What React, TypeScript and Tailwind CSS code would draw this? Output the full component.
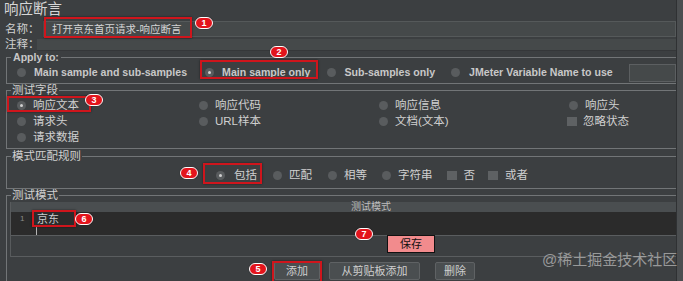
import React from "react";

const Radio = ({ checked }: { checked?: boolean }) => (
  <span className="w-[9px] h-[9px] rounded-full bg-[#595c5e] shrink-0 flex items-center justify-center">
    {checked && <span className="w-[3px] h-[3px] rounded-full bg-[#cfcfcf]" />}
  </span>
);

const Check = () => <span className="w-[10px] h-[9px] bg-[#5e6163] shrink-0" />;

const Opt = ({
  label,
  checked,
  box,
  className = "",
  gap = "ml-[7px]",
}: {
  label: string;
  checked?: boolean;
  box?: boolean;
  className?: string;
  gap?: string;
}) => (
  <div className={"flex items-center " + className}>
    {box ? <Check /> : <Radio checked={checked} />}
    <span className={gap + " whitespace-nowrap"}>{label}</span>
  </div>
);

const Badge = ({ n, x, y }: { n: number; x: number; y: number }) => (
  <div
    className="absolute w-[18px] h-[12px] rounded-full bg-[#e3141c] border-[1.5px] border-white flex items-center justify-center text-white font-bold text-[9px] leading-[9px] shadow-[0_0_1px_rgba(0,0,0,0.6)]"
    style={{ left: x, top: y }}
  >
    {n}
  </div>
);

const RedBox = ({ x, y, w, h }: { x: number; y: number; w: number; h: number }) => (
  <div
    className="absolute border-2 border-[#cf151c] shadow-[0_0_2px_rgba(0,0,0,0.5)]"
    style={{ left: x, top: y, width: w, height: h }}
  />
);

export default function App() {
  return (
    <div className="relative w-[683px] h-[281px] overflow-hidden bg-[#3c3f41] flex font-['Liberation_Sans','Noto_Sans_CJK_SC',sans-serif] text-[#d0d0d0]">
      <div className="w-[676px] flex flex-col">
        {/* title */}
        <div className="h-[19px] pl-[4px] text-[14.5px] leading-[19px] text-[#d6d6d6]">响应断言</div>

        {/* name */}
        <div className="h-[19px] flex items-center">
          <span className="w-[43px] pl-[5px] text-[11.5px] leading-[14px] whitespace-nowrap">名称：</span>
          <div className="flex-1 h-[16px] bg-[#45494a] border border-[#55595a] flex items-center pl-[8px] text-[10.5px] leading-[12px] text-[#d4d4d4]">
            打开京东首页请求-响应断言
          </div>
        </div>

        {/* comment */}
        <div className="h-[13px] flex items-center">
          <span className="w-[37px] pl-[5px] text-[11.5px] leading-[13px] whitespace-nowrap">注释：</span>
          <div className="flex-1 h-[12px] bg-[#45494a] border-b border-[#353739]" />
        </div>

        {/* Apply to */}
        <fieldset className="ml-[6px] border-t border-l border-b border-[#727577]">
          <legend className="ml-[4px] px-[2px] text-[10.6px] leading-[12px] font-bold text-[#c8c8c8]">
            Apply to:
          </legend>
          <div className="h-[20px] flex items-center pl-[10px] font-bold text-[10.6px] text-[#c8c8c8]">
            <Opt label="Main sample and sub-samples" gap="ml-[8px]" />
            <Opt label="Main sample only" checked className="ml-[18px]" gap="ml-[8px]" />
            <Opt label="Sub-samples only" className="ml-[17px]" gap="ml-[8px]" />
            <Opt label="JMeter Variable Name to use" className="ml-[16px]" gap="ml-[9px]" />
            <div className="ml-auto w-[47px] h-[18px] bg-[#45494a] border border-[#5c5f61]" />
          </div>
        </fieldset>

        {/* 测试字段 */}
        <fieldset className="ml-[6px] border-t border-l border-b border-[#727577]">
          <legend className="ml-[4px] px-[1px] text-[11.5px] leading-[12px]">测试字段</legend>
          <div className="grid grid-cols-[182px_180px_190px_1fr] auto-rows-[16px] pl-[10px] pt-[1px] pb-[3px] text-[11.5px] leading-[14px]">
            <Opt label="响应文本" checked />
            <Opt label="响应代码" />
            <Opt label="响应信息" />
            <Opt label="响应头" />
            <Opt label="请求头" />
            <Opt label="URL样本" />
            <Opt label="文档(文本)" />
            <Opt label="忽略状态" box className="-ml-[2px]" gap="ml-[6px]" />
            <Opt label="请求数据" />
          </div>
        </fieldset>

        {/* 模式匹配规则 */}
        <fieldset className="mt-[1px] ml-[6px] border-t border-l border-b border-[#727577]">
          <legend className="ml-[4px] px-[1px] text-[11.5px] leading-[12px]">模式匹配规则</legend>
          <div className="h-[26px] flex items-center pl-[209px] text-[11.5px] leading-[14px]">
            <Opt label="包括" checked gap="ml-[9px]" />
            <Opt label="匹配" className="ml-[16px]" />
            <Opt label="相等" className="ml-[16px]" />
            <Opt label="字符串" className="ml-[15px]" />
            <Opt label="否" box className="ml-[14px]" />
            <Opt label="或者" box className="ml-[13px]" />
          </div>
        </fieldset>

        {/* 测试模式 */}
        <fieldset className="ml-[6px] border-t border-l border-[#727577] flex-1">
          <legend className="ml-[4px] px-[1px] text-[11.5px] leading-[12px]">测试模式</legend>
          <div className="ml-[3px] mt-[1px] border-l border-[#585b5d] flex flex-col">
            <div className="h-[10px] bg-[#4a4e50] pl-[340px] text-[10px] leading-[10px] text-[#bdbdbd]">
              测试模式
            </div>
            <div className="h-[23px] bg-[#2b2b2b] flex items-start pt-[1px]">
              <span className="w-[26px] pl-[9px] text-[8px] leading-[12px] text-[#8a8a8a]">1</span>
              <div className="flex flex-col">
                <span className="text-[11px] leading-[12px] text-[#cccccc]">京东</span>
                <span className="-ml-[1px] w-px h-[10px] bg-[#b5b5b5]" />
              </div>
            </div>
            <div className="h-[22px] border-t border-b border-[#5a5d5f] flex items-start">
              <div className="-mt-[1px] ml-[376px] w-[48px] h-[18px] bg-[#f28b8d] border border-[#111] flex items-center justify-center text-[11px] leading-[12px] text-[#111]">
                保存
              </div>
            </div>
          </div>
          <div className="h-[23px] flex items-start pt-[5px] pl-[267px] text-[11px] leading-[12px] text-[#cfcfcf]">
            <div className="w-[46px] h-[18px] bg-[#4a4e50] border border-[#5f6264] rounded-[2px] flex items-center justify-center">
              添加
            </div>
            <div className="ml-[9px] w-[91px] h-[18px] bg-[#4a4e50] border border-[#5f6264] rounded-[2px] flex items-center justify-center">
              从剪贴板添加
            </div>
            <div className="ml-[15px] w-[40px] h-[18px] bg-[#4a4e50] border border-[#5f6264] rounded-[2px] flex items-center justify-center">
              删除
            </div>
          </div>
        </fieldset>
      </div>
      <div className="w-[7px] bg-[#4b4e50] border-l border-[#2f3133]" />

      {/* annotations */}
      <RedBox x={44} y={17} w={148} h={21} />
      <RedBox x={200} y={60} w={118} h={19} />
      <RedBox x={7} y={96} w={84} h={16} />
      <RedBox x={203} y={163} w={59} h={21} />
      <RedBox x={32} y={210} w={44} h={17} />
      <RedBox x={272} y={261} w={50} h={22} />
      <Badge n={1} x={195} y={17} />
      <Badge n={2} x={270} y={46} />
      <Badge n={3} x={85} y={94} />
      <Badge n={4} x={180} y={167} />
      <Badge n={6} x={75} y={213} />
      <Badge n={7} x={355} y={228} />
      <Badge n={5} x={249} y={263} />

      <div className="absolute left-[542px] top-[251px] text-[15px] leading-[18px] text-[#b0b0b0] opacity-80 whitespace-nowrap">
        @稀土掘金技术社区
      </div>
    </div>
  );
}
